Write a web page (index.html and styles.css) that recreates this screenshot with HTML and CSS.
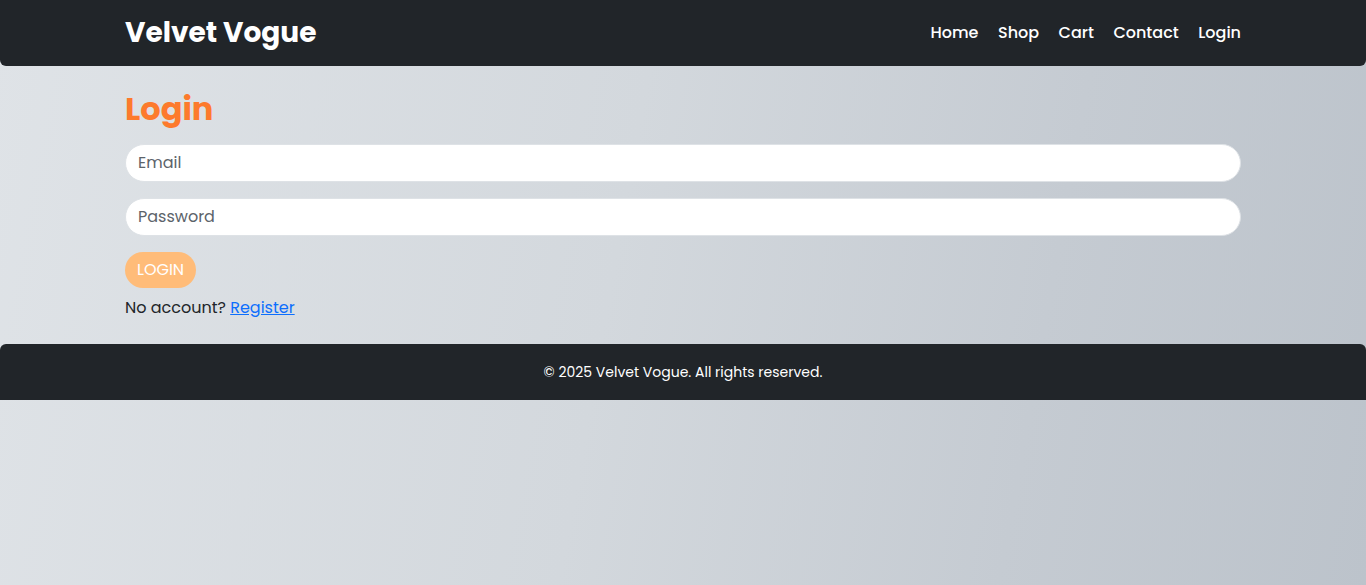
FILE: index.html
```html
<!DOCTYPE html>
<html lang="en">
<head>
<meta charset="utf-8">
<title>Login - Velvet Vogue</title>
<link rel="stylesheet" href="styles.css">
</head>
<body>
<header class="topbar">
  <div class="container bar-inner">
    <a class="brand" href="#">Velvet Vogue</a>
    <nav class="nav">
      <a href="#">Home</a>
      <a href="#">Shop</a>
      <a href="#">Cart</a>
      <a href="#">Contact</a>
      <a href="#">Login</a>
    </nav>
  </div>
</header>
<main class="container main">
  <h2 class="title">Login</h2>
  <form class="form">
    <input class="field" type="email" placeholder="Email">
    <input class="field" type="password" placeholder="Password">
    <button class="btn" type="button">LOGIN</button>
  </form>
  <p class="note">No account? <a href="#">Register</a></p>
</main>
<footer class="footer">
  <p>© 2025 Velvet Vogue. All rights reserved.</p>
</footer>
</body>
</html>
```
FILE: styles.css
```css
* { box-sizing: border-box; }
html, body { margin: 0; height: 100%; }
body {
  font-family: "Poppins", "Inter", "Open Sans", sans-serif;
  color: #212529;
  background: linear-gradient(100deg, #dfe3e7 0%, #d3d8dd 45%, #c5cbd2 75%, #bcc3cb 100%);
  min-height: 585px;
}
.container { width: 1140px; margin: 0 auto; padding: 0 12px; }
.topbar {
  background: #212529;
  height: 66px;
  border-radius: 0 0 6px 6px;
}
.bar-inner { height: 66px; display: flex; align-items: center; justify-content: space-between; }
.brand {
  color: #fff; text-decoration: none; font-weight: 700; font-size: 28px;
}
.nav { display: flex; gap: 19.5px; margin-top: -2px; }
.nav a { color: #fff; text-decoration: none; font-weight: 500; font-size: 16px; }
.main { padding-top: 24px; padding-bottom: 24px; }
.title { margin: 0 0 16px; color: #fd7a2c; font-size: 32px; font-weight: 700; line-height: 38px; }
.form { display: flex; flex-direction: column; gap: 16px; align-items: flex-start; }
.field {
  width: 100%; height: 38px; border: 1px solid #dee2e6; border-radius: 20px;
  background: #fff; padding: 0 12px 1px; font: inherit; font-size: 16px; color: #212529;
}
.field::placeholder { color: #5c636a; }
.btn {
  background: #ffbc79; color: #fff; border: 0; border-radius: 18px; height: 36px;
  padding: 0 12px 2px; font: inherit; font-size: 16px;
}
.note { margin: 8px 0 0; font-size: 16px; line-height: 24px; }
.note a { color: #0d6efd; }
.footer {
  background: #212529; color: #fff; height: 56px; display: flex; align-items: center; justify-content: center;
  border-radius: 6px 6px 0 0;
}
.footer p { margin: 0; font-size: 14px; font-weight: 400; }
```
